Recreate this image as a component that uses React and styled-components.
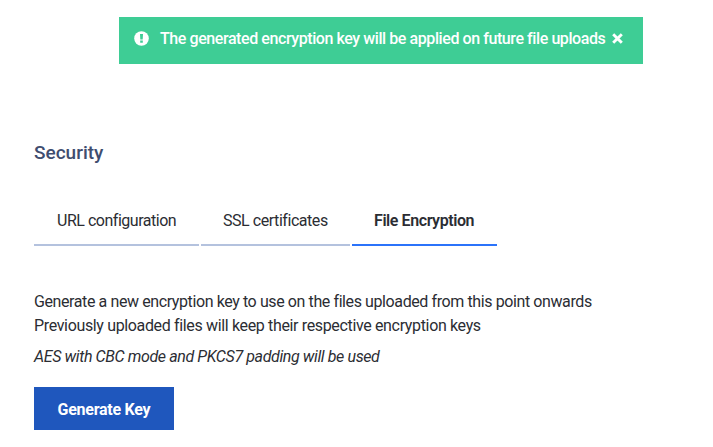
import React from 'react';
import styled, { createGlobalStyle } from 'styled-components';

const GlobalStyle = createGlobalStyle`
  body {
    margin: 0;
    background-color: #ffffff;
    color: #2b2d33;
    font-family: Roboto, 'Liberation Sans', sans-serif;
    font-size: 16px;
    line-height: 24px;
  }
`;

const Page = styled.div`
  display: flex;
  flex-direction: column;
  align-items: flex-start;
  padding: 17px 34px 0;
  white-space: nowrap;
`;

const Alert = styled.div`
  display: flex;
  align-items: center;
  box-sizing: border-box;
  width: 524px;
  height: 47px;
  margin-left: 85px;
  padding: 0 15px 4px;
  background-color: #3ecd95;
  color: #ffffff;
`;

const AlertText = styled.span`
  width: 445px;
  margin: 0 7px 0 11px;
  font-weight: 500;
  letter-spacing: ${(props) => props.$spacing};
`;

const Close = styled.button`
  display: flex;
  padding: 0;
  border: none;
  background: none;
  color: inherit;
`;

const Title = styled.h1`
  margin: 75px 0 0;
  color: #3f4d6f;
  font-size: 19px;
  font-weight: 500;
  line-height: 28px;
`;

const Tabs = styled.div`
  display: flex;
  gap: 2px;
  margin-top: 40px;
`;

const Tab = styled.div`
  box-sizing: border-box;
  width: ${(props) => props.$width};
  height: 39px;
  padding-left: ${(props) => props.$indent || '22px'};
  padding-top: 2px;
  border-bottom: 2px solid ${(props) => (props.$active ? '#2b73fa' : '#b4c2de')};
  font-weight: ${(props) => (props.$active ? 600 : 400)};
  letter-spacing: ${(props) => props.$spacing};
`;

const Desc = styled.p`
  margin: ${(props) => props.$margin || 0};
  font-style: ${(props) => (props.$italic ? 'italic' : 'normal')};
  letter-spacing: ${(props) => props.$spacing};
`;

const Button = styled.button`
  width: 140px;
  height: 43px;
  margin-top: 18px;
  padding: 2px 0 0;
  border: none;
  background-color: #1f57bd;
  color: #ffffff;
  font-family: inherit;
  font-size: 16px;
  font-weight: 700;
  letter-spacing: -0.26px;
`;

const App = () => {
  return (
    <>
      <GlobalStyle />
      <Page>
        <Alert>
          <svg width="15" height="15" viewBox="0 0 15 15">
            <circle cx="7.5" cy="7.5" r="7.3" fill="#fff" />
            <path d="M6 3h3l-.3 5.6H6.3zM6.2 9.6h2.6v2.1H6.2z" fill="#3ecd95" />
          </svg>
          <AlertText $spacing="-0.42px">
            The generated encryption key will be applied on future file uploads
          </AlertText>
          <Close aria-label="Close">
            <svg width="11" height="11" viewBox="0 0 11 11">
              <path d="M1.2 1.2l8.6 8.6M9.8 1.2L1.2 9.8" stroke="#fff" strokeWidth="2.9" />
            </svg>
          </Close>
        </Alert>
        <Title>Security</Title>
        <Tabs>
          <Tab $width="165px" $indent="23px" $spacing="-0.48px">URL configuration</Tab>
          <Tab $width="149px" $spacing="-0.45px">SSL certificates</Tab>
          <Tab $width="145px" $spacing="-0.42px" $active>File Encryption</Tab>
        </Tabs>
        <Desc $margin="44px 0 0" $spacing="-0.4px">
          Generate a new encryption key to use on the files uploaded from this
          point onwards
        </Desc>
        <Desc $spacing="-0.35px">
          Previously uploaded files will keep their respective encryption keys
        </Desc>
        <Desc $margin="7px 0 0" $spacing="-0.39px" $italic>
          AES with CBC mode and PKCS7 padding will be used
        </Desc>
        <Button>Generate Key</Button>
      </Page>
    </>
  );
};

export default App;
